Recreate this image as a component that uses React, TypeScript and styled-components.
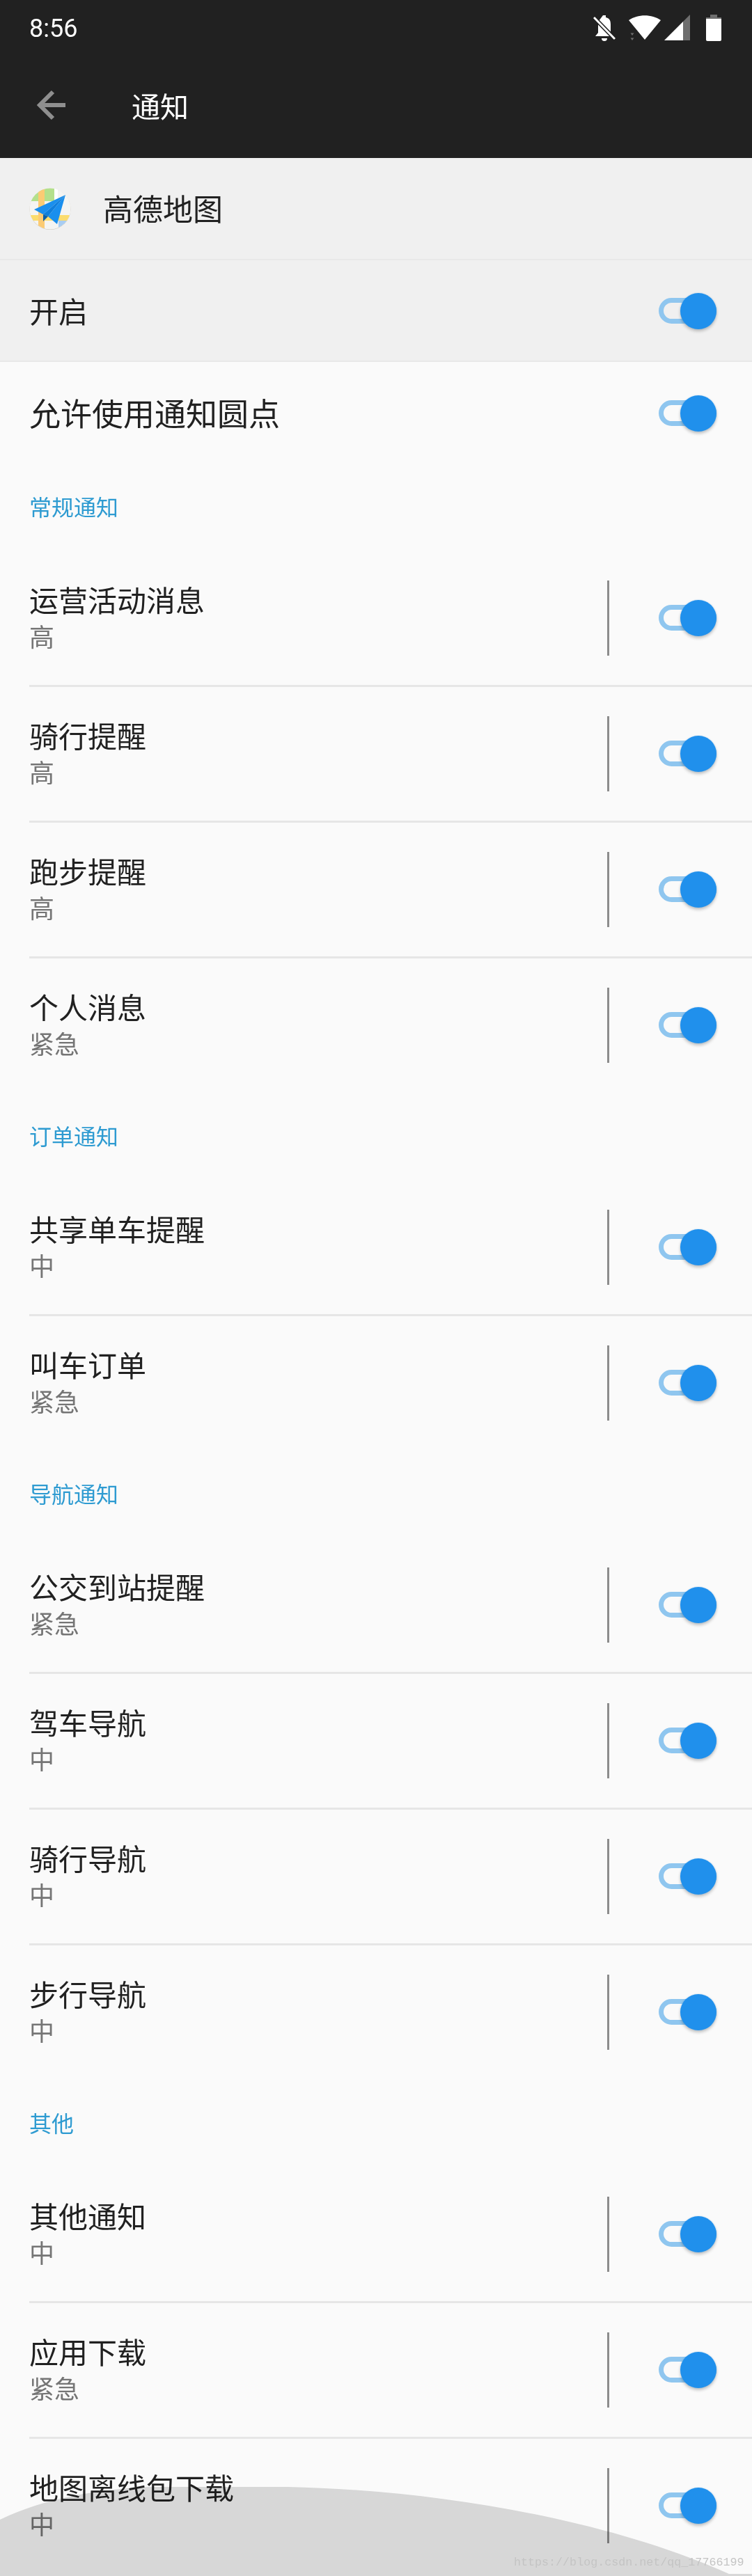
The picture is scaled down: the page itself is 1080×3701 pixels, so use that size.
import styled, { createGlobalStyle } from 'styled-components';

const GlobalStyle = createGlobalStyle`
  html, body {
    margin: 0;
    padding: 0;
    background: #fafafa;
  }
  body {
    font-family: "Noto Sans CJK SC", "Noto Sans", sans-serif;
  }
`;

const Page = styled.div`
  position: relative;
  width: 1080px;
  height: 3701px;
  overflow: hidden;
  background: #fafafa;
`;

const AppBar = styled.header`
  background: #212121;
  height: 227px;
  display: flex;
  flex-direction: column;
`;

const StatusBar = styled.div`
  height: 80px;
  display: flex;
  align-items: center;
  justify-content: space-between;
  padding: 0 44px 0 42px;
  box-sizing: border-box;
`;

const Time = styled.span`
  font-family: Roboto, sans-serif;
  font-size: 36px;
  color: #fff;
  position: relative;
  top: 1px;
`;

const StatusIcons = styled.div`
  display: flex;
  align-items: center;
  height: 38px;
`;

const StatusIcon = styled.svg<{ $gap?: number }>`
  display: block;
  margin-left: ${({ $gap }) => $gap ?? 0}px;
`;

const Toolbar = styled.div`
  flex: 1;
  display: flex;
  align-items: center;
  padding: 0 0 0 52px;
  margin-top: -5px;
`;

const BackIcon = styled.svg`
  display: block;
  margin-right: 93px;
`;

const ToolbarTitle = styled.h1`
  margin: 0;
  font-size: 41px;
  font-weight: 400;
  color: #fff;
`;

const AppHeader = styled.div`
  height: 145px;
  background: #f0f0f0;
  border-bottom: 2px solid #e8e8e8;
  display: flex;
  align-items: center;
  padding-left: 42px;
  gap: 46px;
`;

const AppName = styled.span`
  font-size: 43px;
  color: #212121;
  position: relative;
  top: -2px;
`;

const SwitchRow = styled.div<{ $shaded?: boolean }>`
  height: ${({ $shaded }) => ($shaded ? 142 : 148)}px;
  padding: ${({ $shaded }) => ($shaded ? 2 : 0)}px 51px 0 42px;
  background: ${({ $shaded }) => ($shaded ? '#f0f0f0' : 'transparent')};
  border-bottom: ${({ $shaded }) => ($shaded ? '2px solid #e8e8e8' : 'none')};
  display: flex;
  align-items: center;
  justify-content: space-between;
`;

const RowLabel = styled.span<{ $large?: boolean }>`
  font-size: ${({ $large }) => ($large ? 45 : 42)}px;
  color: #212121;
  position: relative;
  top: -2px;
`;

const SectionTitle = styled.h2`
  margin: 0;
  height: 118px;
  padding: 0 0 6px 42px;
  display: flex;
  align-items: center;
  font-size: 32px;
  font-weight: 400;
  color: #2e9bd1;
`;

const ChannelRow = styled.div`
  height: 195px;
  margin-left: 42px;
  padding-right: 51px;
  box-sizing: border-box;
  display: flex;
  align-items: center;
  border-bottom: 3px solid #e6e6e6;

  &:last-child {
    border-bottom-color: transparent;
  }
`;

const ChannelText = styled.div`
  flex: 1;
  display: flex;
  flex-direction: column;
  margin-top: -7px;
`;

const ChannelName = styled.span`
  font-size: 42px;
  line-height: 56px;
  color: #212121;
`;

const ChannelLevel = styled.span`
  font-size: 36px;
  line-height: 48px;
  color: #757575;
`;

const Separator = styled.div`
  width: 3px;
  height: 108px;
  background: #8c8c8c;
  margin-right: 71px;
`;

const Toggle = styled.div`
  position: relative;
  width: 83px;
  height: 52px;
  flex: none;
`;

const Track = styled.div`
  position: absolute;
  left: 0;
  top: 7px;
  width: 83px;
  height: 37px;
  box-sizing: border-box;
  border: 7px solid #8fc6ef;
  border-radius: 19px;
`;

const Knob = styled.div`
  position: absolute;
  right: 0;
  top: 0;
  width: 52px;
  height: 52px;
  border-radius: 50%;
  background: #2090ec;
  box-shadow: 0 0 2px rgba(32, 144, 236, 0.35), 0 3px 4px rgba(0, 0, 0, 0.22);
`;

const BottomArc = styled.svg`
  position: absolute;
  left: 0;
  bottom: 0;
  display: block;
  mix-blend-mode: multiply;
  pointer-events: none;
`;

const Watermark = styled.span`
  position: absolute;
  left: 738px;
  top: 3671px;
  font-family: "Liberation Mono", monospace;
  font-size: 16.7px;
  line-height: 22px;
  color: #c4c4c4;
  white-space: nowrap;
`;

type Channel = { name: string; level: string };
type Section = { title: string; channels: Channel[] };

const sections: Section[] = [
  {
    title: '常规通知',
    channels: [
      { name: '运营活动消息', level: '高' },
      { name: '骑行提醒', level: '高' },
      { name: '跑步提醒', level: '高' },
      { name: '个人消息', level: '紧急' },
    ],
  },
  {
    title: '订单通知',
    channels: [
      { name: '共享单车提醒', level: '中' },
      { name: '叫车订单', level: '紧急' },
    ],
  },
  {
    title: '导航通知',
    channels: [
      { name: '公交到站提醒', level: '紧急' },
      { name: '驾车导航', level: '中' },
      { name: '骑行导航', level: '中' },
      { name: '步行导航', level: '中' },
    ],
  },
  {
    title: '其他',
    channels: [
      { name: '其他通知', level: '中' },
      { name: '应用下载', level: '紧急' },
      { name: '地图离线包下载', level: '中' },
    ],
  },
];

function Switch() {
  return (
    <Toggle>
      <Track />
      <Knob />
    </Toggle>
  );
}

function AmapLogo() {
  return (
    <svg width="60" height="60" viewBox="0 0 60 60">
      <defs>
        <clipPath id="logo-circle">
          <circle cx="30" cy="30" r="29.5" />
        </clipPath>
      </defs>
      <circle cx="30" cy="30.5" r="29.5" fill="#c9c4ba" />
      <g clipPath="url(#logo-circle)">
        <rect width="60" height="60" fill="#f4f4f2" />
        <rect x="3" y="0" width="33" height="19" fill="#b4e08c" />
        <rect x="0" y="39" width="60" height="8" fill="#fbdc6e" />
        <rect x="13" y="0" width="9" height="60" fill="#fbcb74" />
        <rect x="36" y="0" width="5" height="19" fill="#fff" />
        <path d="M42 47H60V60H42Z" fill="#a9cdf2" />
      </g>
      <path d="M52 10L7 31L20 38Z" fill="#1a8fee" />
      <path d="M52 10L27 41L40 52Z" fill="#1a8fee" />
      <path d="M52 10L20 38L27 41Z" fill="#0f7fdc" />
      <path d="M20 38V48L27 41Z" fill="#0b5fa8" />
    </svg>
  );
}

export default function App() {
  return (
    <Page>
      <GlobalStyle />
      <AppBar>
        <StatusBar>
          <Time>8:56</Time>
          <StatusIcons>
            <StatusIcon width="32" height="38" viewBox="0 0 32 38">
              <path d="M14 1h4v3c5 1 7 4 7 10v12l4 5H3l4-5V14c0-2 .3-4 1-5Z" fill="#fff" />
              <path d="M12 34h8a4 4 0 0 1-8 0Z" fill="#fff" />
              <path d="M1 4L31 35" stroke="#212121" strokeWidth="6" />
              <path d="M1 4L31 35" stroke="#fff" strokeWidth="3" />
            </StatusIcon>
            <StatusIcon $gap={19} width="46" height="38" viewBox="0 0 46 38">
              <path d="M0 8C13-1 33-1 46 8L23 36Z" fill="#fff" />
              <path d="M6 30l-2.5-3.5h5ZM6 37l-2.5-3.500h5Z" fill="#6e6e6e" transform="translate(-1 0)" />
            </StatusIcon>
            <StatusIcon $gap={5} width="37" height="38" viewBox="0 0 37 38">
              <path d="M0 37L27 10V37Z" fill="#fff" />
              <path d="M27 10L37 0V37H27Z" fill="#6e6e6e" />
            </StatusIcon>
            <StatusIcon $gap={23} width="22" height="38" viewBox="0 0 22 38">
              <path d="M6 0h10v4h6v2H0V4h6Z" fill="#6e6e6e" />
              <path d="M0 6h22v30a2 2 0 0 1-2 2H2a2 2 0 0 1-2-2Z" fill="#fff" />
            </StatusIcon>
          </StatusIcons>
        </StatusBar>
        <Toolbar>
          <BackIcon width="44" height="44" viewBox="0 0 44 44" fill="none" stroke="#8f8f8f" strokeWidth="6">
            <path d="M42 22H6" />
            <path d="M24 3L5 22L24 41" />
          </BackIcon>
          <ToolbarTitle>通知</ToolbarTitle>
        </Toolbar>
      </AppBar>

      <AppHeader>
        <AmapLogo />
        <AppName>高德地图</AppName>
      </AppHeader>

      <SwitchRow $shaded>
        <RowLabel>开启</RowLabel>
        <Switch />
      </SwitchRow>
      <SwitchRow>
        <RowLabel $large>允许使用通知圆点</RowLabel>
        <Switch />
      </SwitchRow>

      {sections.map((section) => (
        <section key={section.title}>
          <SectionTitle>{section.title}</SectionTitle>
          {section.channels.map((channel) => (
            <ChannelRow key={channel.name}>
              <ChannelText>
                <ChannelName>{channel.name}</ChannelName>
                <ChannelLevel>{channel.level}</ChannelLevel>
              </ChannelText>
              <Separator />
              <Switch />
            </ChannelRow>
          ))}
        </section>
      ))}

      <BottomArc width="1080" height="128" viewBox="0 0 1080 128">
        <path d="M0 47C130 -15 290 0 413 0C640 5 880 50 1047 125V125H1080V128H0Z" fill="#dcdcdc" />
      </BottomArc>
      <Watermark>https://blog.csdn.net/qq_17766199</Watermark>
    </Page>
  );
}
